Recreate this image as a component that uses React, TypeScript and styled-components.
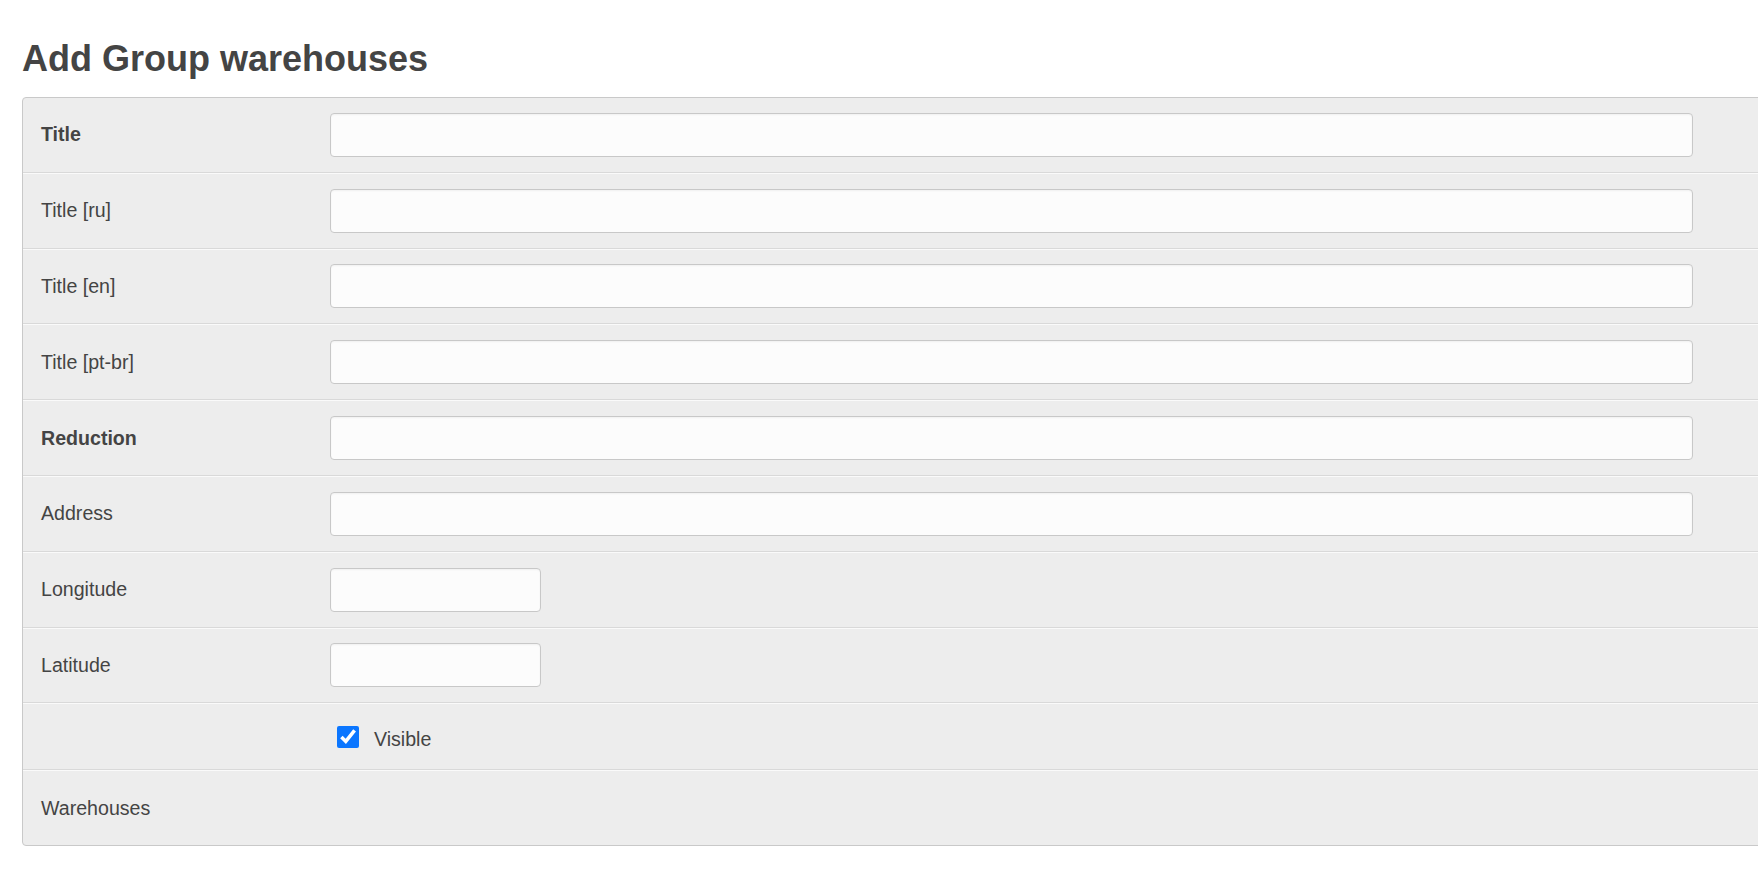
import React from "react";
import styled, { createGlobalStyle } from "styled-components";

const GlobalStyle = createGlobalStyle`
  html, body {
    margin: 0;
    padding: 0;
    background: #fff;
    overflow-x: hidden;
  }
  body {
    font-family: "Liberation Sans", Arial, sans-serif;
    color: #444;
  }
`;

const Page = styled.div`
  padding: 38px 0 40px 22px;
`;

const Heading = styled.h1`
  margin: 0 0 17px;
  font-size: 36px;
  line-height: normal;
  font-weight: bold;
  color: #444;
`;

const Panel = styled.div`
  width: 1800px;
  background: #ededed;
  border: 1px solid #c9c9c9;
  border-radius: 4px;
`;

const Row = styled.div<{ $tall?: boolean }>`
  display: flex;
  align-items: center;
  min-height: ${p => (p.$tall ? "73.8px" : "65px")};
  padding: 0 0 0 18px;
  border-top: 1px solid #fafafa;
  border-bottom: 1px solid #d9d9d9;
  &:first-child {
    border-top: none;
  }
  &:last-child {
    border-bottom: none;
  }
`;

const Label = styled.div<{ $bold?: boolean }>`
  width: 289px;
  flex-shrink: 0;
  font-size: 19.6px;
  font-weight: ${p => (p.$bold ? "bold" : "normal")};
  color: #444;
`;

const TextInput = styled.input<{ $short?: boolean }>`
  box-sizing: border-box;
  width: ${p => (p.$short ? "211px" : "1363px")};
  height: 44px;
  margin: 0;
  padding: 6px 10px;
  font-family: "Liberation Sans", Arial, sans-serif;
  font-size: 19px;
  color: #444;
  background: #fcfcfc;
  border: 1px solid #c8c8c8;
  border-radius: 4px;
  box-shadow: inset 0 1px 2px rgba(0, 0, 0, 0.05);
  outline: none;
`;

const CheckLabel = styled.label`
  display: flex;
  align-items: center;
  gap: 15px;
  margin-left: 7px;
  font-size: 19.6px;
  color: #444;
`;

const CheckText = styled.span`
  padding-top: 5px;
`;

const Check = styled.input`
  width: 22px;
  height: 22px;
  margin: 0;
  accent-color: #0b76ff;
`;

type Field = { label: string; bold?: boolean; short?: boolean };

const fields: Field[] = [
  { label: "Title", bold: true },
  { label: "Title [ru]" },
  { label: "Title [en]" },
  { label: "Title [pt-br]" },
  { label: "Reduction", bold: true },
  { label: "Address" },
  { label: "Longitude", short: true },
  { label: "Latitude", short: true },
];

const App = () => {
  return (
    <>
      <GlobalStyle />
      <Page>
        <Heading>Add Group warehouses</Heading>
        <Panel>
          {fields.map(f => (
            <Row $tall key={f.label}>
              <Label $bold={f.bold}>{f.label}</Label>
              <TextInput type="text" $short={f.short} />
            </Row>
          ))}
          <Row>
            <Label />
            <CheckLabel>
              <Check type="checkbox" defaultChecked />
              <CheckText>Visible</CheckText>
            </CheckLabel>
          </Row>
          <Row $tall>
            <Label>Warehouses</Label>
          </Row>
        </Panel>
      </Page>
    </>
  );
};

export default App;
